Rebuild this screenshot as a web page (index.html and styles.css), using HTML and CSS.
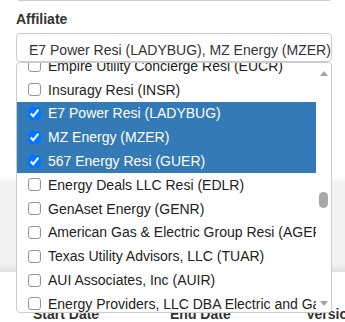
FILE: index.html
```html
<!DOCTYPE html>
<html>
    <head lang="en">
        <meta charset="UTF-8">
        <title>Affiliate</title>
        <link rel="stylesheet" href="styles.css">
    </head>
    <body>
        <div class="prev-field"></div>
        <div class="field">
            <label class="field-label">Affiliate</label>
            <div class="select-box">E7 Power Resi (LADYBUG), MZ Energy (MZER)</div>
            <div class="dropdown">
                <div class="options-view">
                    <ul class="options">
                        <li><input type="checkbox"><span>Empire Utility Concierge Resi (EUCR)</span></li>
                        <li><input type="checkbox"><span>Insuragy Resi (INSR)</span></li>
                        <li class="selected"><input type="checkbox" checked><span>E7 Power Resi (LADYBUG)</span></li>
                        <li class="selected"><input type="checkbox" checked><span>MZ Energy (MZER)</span></li>
                        <li class="selected"><input type="checkbox" checked><span>567 Energy Resi (GUER)</span></li>
                        <li><input type="checkbox"><span>Energy Deals LLC Resi (EDLR)</span></li>
                        <li><input type="checkbox"><span>GenAset Energy (GENR)</span></li>
                        <li><input type="checkbox"><span>American Gas &amp; Electric Group Resi (AGER)</span></li>
                        <li><input type="checkbox"><span>Texas Utility Advisors, LLC (TUAR)</span></li>
                        <li><input type="checkbox"><span>AUI Associates, Inc (AUIR)</span></li>
                        <li><input type="checkbox"><span>Energy Providers, LLC DBA Electric and Gas (EPEG)</span></li>
                    </ul>
                </div>
                <div class="scrollbar">
                    <svg class="arrow-up" width="8" height="5" viewBox="0 0 8 5"><path d="M0 5 L4 0 L8 5 Z" fill="#a3a3a3"/></svg>
                    <div class="thumb"></div>
                    <svg class="arrow-down" width="8" height="5" viewBox="0 0 8 5"><path d="M0 0 L8 0 L4 5 Z" fill="#a3a3a3"/></svg>
                </div>
            </div>
        </div>
        <div class="panel"></div>
        <div class="table-head">
            <span>Start Date</span>
            <span>End Date</span>
            <span>Version</span>
        </div>
    </body>
</html>
```

FILE: styles.css
```css
*{
    margin:0;
    padding:0;
    box-sizing:border-box;
}
body{
    font-family:"Liberation Sans", Arial, sans-serif;
    font-size:14px;
    color:#333;
    background:#fff;
    overflow:hidden;
}
ul{
    list-style:none;
}
.prev-field{
    margin:-4px 0 0 16px;
    width:316px;
    height:5px;
    border:1px solid #ccc;
    border-top:none;
    border-radius:0 0 4px 4px;
}
.field{
    position:relative;
    margin:8px 0 0 16px;
    width:316px;
}
.field-label{
    display:block;
    font-weight:bold;
    line-height:20px;
    margin-bottom:4px;
}
.select-box{
    height:29px;
    border:1px solid #ccc;
    border-radius:4px;
    padding:6px 0 0 12px;
    line-height:20px;
    white-space:nowrap;
    overflow:hidden;
}
.dropdown{
    position:absolute;
    top:100%;
    left:0;
    width:316px;
    height:251px;
    border:1px solid #ccc;
    border-radius:4px;
    background:#fff;
    display:flex;
    overflow:hidden;
    z-index:2;
}
.options-view{
    flex:1;
    overflow:hidden;
}
.options{
    margin-top:-9px;
}
.options li{
    display:flex;
    align-items:center;
    gap:7px;
    height:23.8px;
    padding-left:11px;
    white-space:nowrap;
    color:#222;
}
.options li input{
    margin:0;
    width:13px;
    height:13px;
    flex:none;
}
.options li input:not(:checked){
    appearance:none;
    border:1px solid #959595;
    border-radius:3px;
    background:#fff;
}
.options li.selected{
    background:#337ab7;
    color:#fff;
}
.scrollbar{
    width:15px;
    display:flex;
    flex-direction:column;
    align-items:center;
    background:#fff;
}
.arrow-up{
    margin-top:8px;
}
.thumb{
    margin-top:116px;
    width:9px;
    height:16px;
    border-radius:5px;
    background:#a8a8a8;
}
.arrow-down{
    margin-top:auto;
    margin-bottom:6px;
}
.panel{
    margin-top:116px;
    height:94px;
    background:linear-gradient(#fbfbfb, #f2f2f2 6px, #f2f2f2 calc(100% - 8px), #e0e0e0);
}
.table-head{
    display:grid;
    grid-template-columns:137px 136px auto;
    margin-top:32px;
    padding-left:33px;
    font-weight:bold;
    line-height:20px;
    white-space:nowrap;
}
```
